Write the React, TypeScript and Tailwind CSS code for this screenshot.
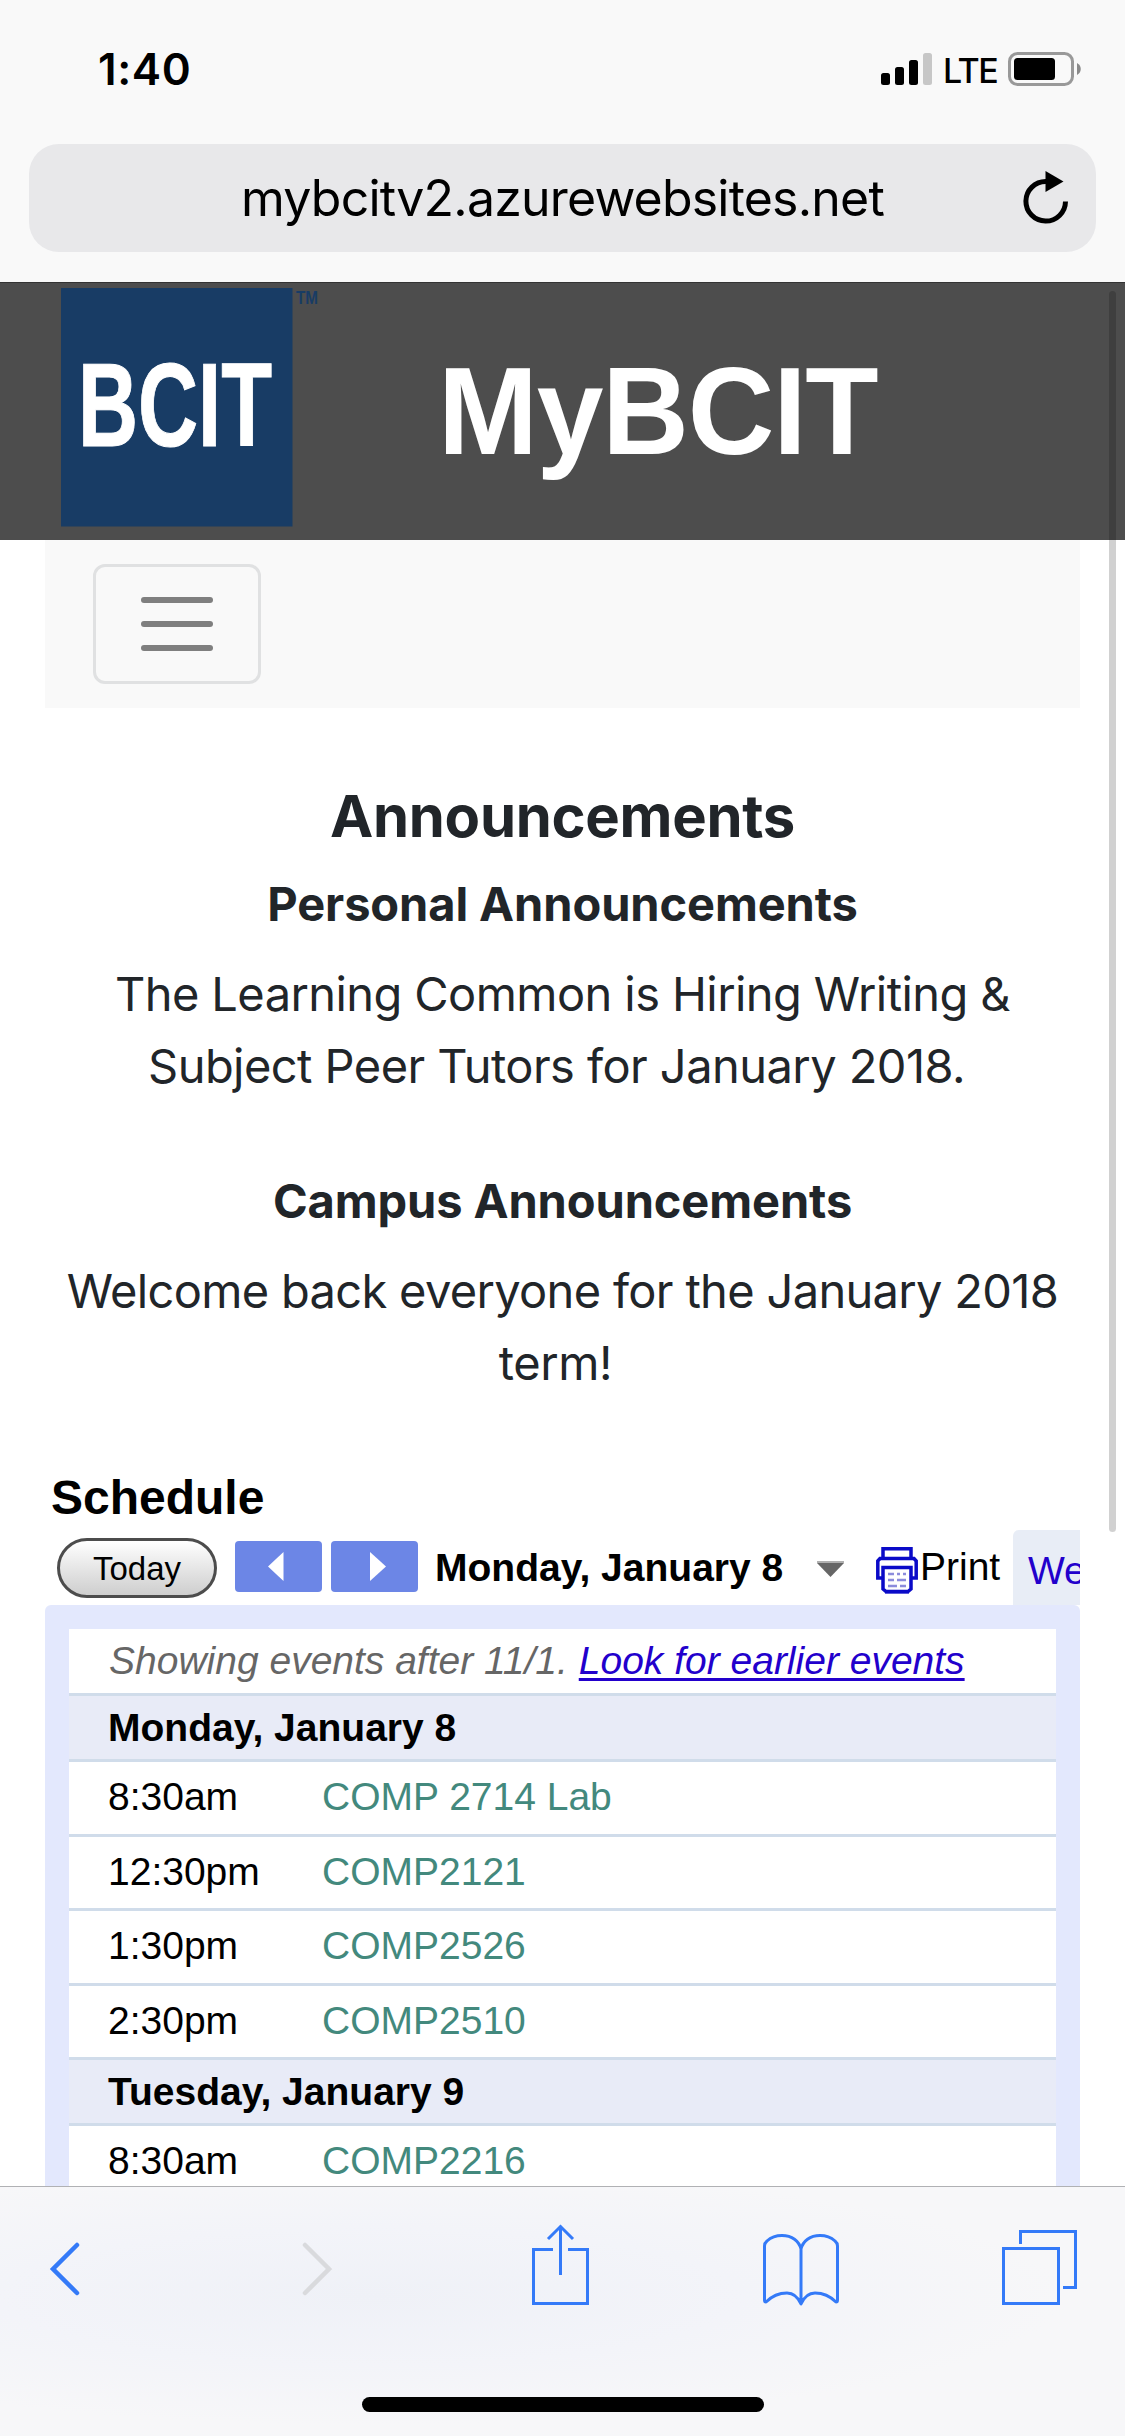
import type { ReactNode } from "react";

const inter = "font-['Inter','Noto_Sans',sans-serif]";
const arial = "font-['Liberation_Sans',Arial,sans-serif]";

function StatusBar() {
  return (
    <div className="flex h-[138px] items-center justify-between pl-[98px] pr-[44px]">
      <span className="text-[44px] leading-[60px] font-semibold tracking-[0.6px] text-black">1:40</span>
      <div className="flex items-center">
        <svg width="51" height="32" viewBox="0 0 51 32">
          <rect x="0" y="20" width="9" height="12" rx="2.5" />
          <rect x="14" y="14" width="9" height="18" rx="2.5" />
          <rect x="28" y="7" width="9" height="25" rx="2.5" />
          <rect x="42" y="0" width="9" height="32" rx="2.5" fill="#c7c7c7" />
        </svg>
        <span className="ml-[11px] w-[65px] pt-[3px] text-[34px] leading-[40px] font-medium tracking-[-1.5px] text-black">LTE</span>
        <svg width="73" height="34" viewBox="0 0 73 34">
          <rect x="1.5" y="1.5" width="63" height="31" rx="8" fill="none" stroke="#999" strokeWidth="3" />
          <rect x="6" y="6" width="41" height="22" rx="3.5" />
          <path d="M69 11c5 2.500 5 9.500 0 12z" fill="#8a8a8a" />
        </svg>
      </div>
    </div>
  );
}

function AddressBar() {
  return (
    <div className="mx-[29px] mt-[6px] flex h-[108px] items-center justify-center rounded-[30px] bg-[#e8e8ea]">
      <div className="w-[94px]" />
      <div className="flex-1 text-center text-[50px] leading-[60px] tracking-[-0.8px] whitespace-nowrap text-black">
        mybcitv2.azurewebsites.net
      </div>
      <svg width="94" height="60" viewBox="0 0 94 60" fill="none">
        <path d="M44 13.500A19.800 19.800 0 1 0 63.500 33.500" stroke="#000" strokeWidth="5" />
        <path d="M43.500 3L61.500 13.500L43.500 24z" fill="#000" />
      </svg>
    </div>
  );
}

function SiteHeader() {
  return (
    <header className="flex h-[258px] items-start border-t border-[#333] bg-[#4d4d4d]">
      <svg className="mt-[5px] ml-[61px] overflow-visible" width="260" height="239" viewBox="0 0 260 239">
        <rect width="231.500" height="238.500" fill="#183c65" />
        <text
          x="17"
          y="158"
          textLength="194"
          lengthAdjust="spacingAndGlyphs"
          fontFamily="Liberation Sans, Arial, sans-serif"
          fontWeight="bold"
          fontSize="119"
          fill="#fff"
          stroke="#fff"
          strokeWidth="1"
        >
          BCIT
        </text>
        <text
          x="235"
          y="16"
          textLength="22"
          lengthAdjust="spacingAndGlyphs"
          fontFamily="Liberation Sans, Arial, sans-serif"
          fontWeight="bold"
          fontSize="19"
          fill="#183c65"
        >
          TM
        </text>
      </svg>
      <h1
        className={`${arial} ml-[117px] scale-y-[1.04] text-[120px] leading-[254px] font-bold tracking-[-1.2px] text-white`}
      >
        MyBCIT
      </h1>
    </header>
  );
}

function Navbar() {
  return (
    <nav className="mx-[45px] flex h-[168px] items-center bg-[#f9f9f9] pl-[48px]">
      <button className="flex h-[120px] w-[168px] flex-col items-center justify-center gap-[18px] rounded-[12px] border-[3px] border-[#e0e1e2]">
        <span className="h-[6px] w-[72px] rounded-full bg-[#7f7f7f]" />
        <span className="h-[6px] w-[72px] rounded-full bg-[#7f7f7f]" />
        <span className="h-[6px] w-[72px] rounded-full bg-[#7f7f7f]" />
      </button>
    </nav>
  );
}

function Announcements() {
  return (
    <section className="flex flex-col items-center text-center whitespace-nowrap text-[#212529]">
      <h2 className="mt-[72px] text-[58px] leading-[72px] font-bold tracking-[-0.3px]">Announcements</h2>
      <h3 className="mt-[16px] text-[47px] leading-[72px] font-bold tracking-[-0.1px]">Personal Announcements</h3>
      <p className="mt-[18px] text-[47px] leading-[72px] tracking-[-0.58px]">
        The Learning Common is Hiring Writing &amp;
      </p>
      <p className="pr-[12px] text-[47px] leading-[72px] tracking-[-0.55px]">Subject Peer Tutors for January 2018.</p>
      <h3 className="mt-[63px] text-[47px] leading-[72px] font-bold tracking-[-0.1px]">Campus Announcements</h3>
      <p className="mt-[18px] text-[47px] leading-[72px] tracking-[-0.67px]">
        Welcome back everyone for the January 2018
      </p>
      <p className="pr-[14px] text-[47px] leading-[72px] tracking-[-0.4px]">term!</p>
    </section>
  );
}

function StepButton({ points }: { points: string }) {
  return (
    <button className="h-[51px] w-[87px] rounded-[4px] bg-[#6c86e6]">
      <svg width="87" height="51" viewBox="0 0 87 51">
        <polygon points={points} fill="#fff" />
      </svg>
    </button>
  );
}

function PrinterIcon() {
  return (
    <svg width="42" height="47" viewBox="0 0 42 47" fill="none" stroke="#0a0ac8" strokeWidth="3.500">
      <path d="M7 12V1.800H35V12" />
      <path d="M7 31H1.800V14L4 11.500H38L40.200 14V31H35" />
      <path d="M7 42V20.500H35V42L32 44.500H10z" fill="#fff" />
      <path d="M12 27H18M21 27H24M27 27H30M12 33H18M21 33H30M12 39H21M24 39H30" stroke="#8c8cdc" strokeWidth="2.500" />
      <path d="M9 44.800H33" />
    </svg>
  );
}

function CalendarToolbar() {
  return (
    <div className="flex h-[75px] items-start overflow-hidden whitespace-nowrap text-black">
      <button className="mt-[8px] ml-[12px] h-[60px] w-[160px] rounded-full border-[3px] border-[#4c4c4c] bg-linear-to-b from-white to-[#cecece] text-[33px] leading-[55px]">
        Today
      </button>
      <div className="mt-[11px] ml-[18px] flex gap-[9px]">
        <StepButton points="33,25.500 48.500,11 48.500,40" />
        <StepButton points="39,11 39,40 55,25.500" />
      </div>
      <span className="ml-[17px] w-[350px] text-[39px] leading-[75px] font-bold">Monday, January 8</span>
      <svg className="mt-[31px] ml-[32px]" width="27" height="16" viewBox="0 0 27 16">
        <path d="M0 0H27V2L13.500 16L0 2z" fill="#666" />
        <path d="M0 0H27V2H0z" fill="#b0b0b0" />
      </svg>
      <div className="mt-[17px] ml-[32px]">
        <PrinterIcon />
      </div>
      <span className="w-[95px] pl-[2px] text-[39px] leading-[74px]">Print</span>
      <div className="h-[75px] flex-1 overflow-hidden rounded-tl-[6px] bg-[#e8edf6] pl-[15px] text-[39px] leading-[81px] text-[#20c]">
        Week
      </div>
    </div>
  );
}

function DayHeader({ children }: { children: ReactNode }) {
  return (
    <div className="h-[66px] border-b-[3px] border-[#d0dcea] bg-[#e8ebf7] pl-[39px] text-[39px] leading-[63px] font-bold text-black">
      {children}
    </div>
  );
}

function EventRow({ time, title }: { time: string; title: string }) {
  return (
    <div className="flex h-[74.500px] border-b-[3px] border-[#d0dcea] pl-[39px] text-[39px] leading-[69px]">
      <span className="w-[214px] text-black">{time}</span>
      <span className="text-[#43897d]">{title}</span>
    </div>
  );
}

const monday = [
  { time: "8:30am", title: "COMP 2714 Lab" },
  { time: "12:30pm", title: "COMP2121" },
  { time: "1:30pm", title: "COMP2526" },
  { time: "2:30pm", title: "COMP2510" },
];

function Schedule() {
  return (
    <section className={`${arial} mx-[45px] mt-[67px]`}>
      <h2 className="pl-[6px] text-[48px] leading-[64px] font-bold text-black">Schedule</h2>
      <CalendarToolbar />
      <div className="rounded-t-[6px] bg-[#e3e8fd] px-[24px] pt-[24px]">
        <div className="bg-white">
          <div className="h-[67px] border-b-[3px] border-[#d0dcea] pl-[40px] text-[39px] leading-[63px] whitespace-pre text-[#666] italic">
            Showing events after 11/1.{" "}
            <a className="text-[#20c] underline decoration-[2.500px] underline-offset-[4px]">Look for earlier events</a>
          </div>
          <DayHeader>Monday, January 8</DayHeader>
          {monday.map((e) => (
            <EventRow key={e.title} time={e.time} title={e.title} />
          ))}
          <DayHeader>Tuesday, January 9</DayHeader>
          <EventRow time="8:30am" title="COMP2216" />
        </div>
      </div>
    </section>
  );
}

function BottomBar() {
  return (
    <footer className="flex h-[250px] flex-col items-center border-t border-[#b0b1b4] bg-[#f6f6f9] bg-[radial-gradient(ellipse_at_33%_44%,#eff1f7_0%,#f3f4f9_35%,#f7f7f9_65%)]">
      <div className="flex h-[210px] w-full items-start pt-[35px]">
        <svg className="mt-[20px] ml-[49px]" width="32" height="54" viewBox="0 0 32 54" fill="none" stroke="#347af8" strokeWidth="4.500" strokeLinecap="round">
          <path d="M28 3L4 27L28 51" />
        </svg>
        <svg className="mt-[20px] ml-[220px]" width="32" height="54" viewBox="0 0 32 54" fill="none" stroke="#d9dadd" strokeWidth="4.500" strokeLinecap="round">
          <path d="M4 3L28 27L4 51" />
        </svg>
        <svg className="mt-px ml-[199px]" width="57" height="82" viewBox="0 0 57 82" fill="none" stroke="#347af8" strokeWidth="3">
          <path d="M21 26.500H1.500V80.500H55.500V26.500H36" />
          <path d="M28.500 52V4" />
          <path d="M16 16L28.500 3.500L41 16" />
        </svg>
        <svg className="mt-[10px] ml-[174px]" width="76" height="76" viewBox="0 0 76 76" fill="none" stroke="#347af8" strokeWidth="3" strokeLinejoin="round">
          <path d="M38 72C34 63 29 61 24 61C15 61 7 66 3 70Q1.500 70 1.500 68V14Q1.500 11 4 9Q10 3.500 19 3.500C29 3.500 36 9 38 17C40 9 47 3.500 57 3.500Q66 3.500 72 9Q74.500 11 74.500 14V68Q74.500 70 73 70C69 66 61 61 52 61C47 61 42 63 38 72V15" />
        </svg>
        <svg className="mt-[8px] ml-[163px]" width="75" height="75" viewBox="0 0 75 75" fill="none" stroke="#347af8" strokeWidth="3">
          <rect x="1.500" y="18.500" width="55" height="55" />
          <path d="M18.500 14V1.500H73.500V57.500H61" />
        </svg>
      </div>
      <div className="h-[15px] w-[402px] rounded-full bg-black" />
    </footer>
  );
}

export default function App() {
  return (
    <div className={`${inter} relative flex h-[2436px] w-[1125px] flex-col overflow-hidden bg-white`}>
      <div className="h-[282px] shrink-0 bg-[#f9f9f9]">
        <StatusBar />
        <AddressBar />
      </div>
      <main className="h-[1904px] shrink-0 overflow-hidden">
        <SiteHeader />
        <Navbar />
        <Announcements />
        <Schedule />
      </main>
      <BottomBar />
      <div className="absolute top-[291px] right-[9px] h-[1241px] w-[7px] rounded-full bg-black/18" />
    </div>
  );
}
